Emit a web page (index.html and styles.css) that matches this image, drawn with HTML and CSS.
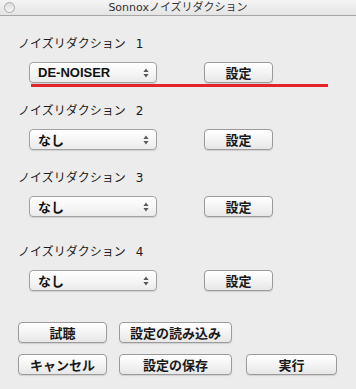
FILE: index.html
```html
<!DOCTYPE html>
<html lang="ja">
<head>
    <meta charset="UTF-8">
    <meta name="viewport" content="width=device-width, initial-scale=1.0">
    <title>Sonnoxノイズリダクション</title>
    <link rel="stylesheet" href="styles.css">
</head>
<body>
    <div class="window">
        <div class="titlebar">
            <span class="close"></span>
            <span class="title">Sonnoxノイズリダクション</span>
            <span></span>
        </div>

        <div class="content">
            <!-- 1 -->
            <div class="group">
                <p class="label">ノイズリダクション<span class="num">1</span></p>
                <div class="row">
                    <div class="select">
                        <span>DE-NOISER</span>
                        <svg class="arrows" width="6" height="10" viewBox="0 0 6 10"><path d="M3 0.5L5.6 4H0.4z M3 9.5L5.6 6H0.4z" fill="#5a5a5a"/></svg>
                    </div>
                    <button class="btn btn-set">設定</button>
                    <span class="mark"></span>
                </div>
            </div>
            <!-- 2 -->
            <div class="group">
                <p class="label">ノイズリダクション<span class="num">2</span></p>
                <div class="row">
                    <div class="select">
                        <span>なし</span>
                        <svg class="arrows" width="6" height="10" viewBox="0 0 6 10"><path d="M3 0.5L5.6 4H0.4z M3 9.5L5.6 6H0.4z" fill="#5a5a5a"/></svg>
                    </div>
                    <button class="btn btn-set">設定</button>
                </div>
            </div>
            <!-- 3 -->
            <div class="group">
                <p class="label">ノイズリダクション<span class="num">3</span></p>
                <div class="row">
                    <div class="select">
                        <span>なし</span>
                        <svg class="arrows" width="6" height="10" viewBox="0 0 6 10"><path d="M3 0.5L5.6 4H0.4z M3 9.5L5.6 6H0.4z" fill="#5a5a5a"/></svg>
                    </div>
                    <button class="btn btn-set">設定</button>
                </div>
            </div>
            <!-- 4 -->
            <div class="group group-last">
                <p class="label">ノイズリダクション<span class="num">4</span></p>
                <div class="row">
                    <div class="select">
                        <span>なし</span>
                        <svg class="arrows" width="6" height="10" viewBox="0 0 6 10"><path d="M3 0.5L5.6 4H0.4z M3 9.5L5.6 6H0.4z" fill="#5a5a5a"/></svg>
                    </div>
                    <button class="btn btn-set">設定</button>
                </div>
            </div>

            <div class="actions">
                <div class="action-row">
                    <button class="btn w-small">試聴</button>
                    <button class="btn w-wide">設定の読み込み</button>
                </div>
                <div class="action-row">
                    <button class="btn w-small">キャンセル</button>
                    <button class="btn w-wide">設定の保存</button>
                    <button class="btn w-run">実行</button>
                </div>
            </div>
        </div>
    </div>
</body>
</html>
```

FILE: styles.css
```css
*{
    margin: 0;
    padding: 0;
    box-sizing: border-box;
}
body{
    background: #ececec;
    font-family: "Noto Sans CJK JP", sans-serif;
    color: #111;
}
.window{
    width: 356px;
    height: 389px;
    background: #ececec;
}
.titlebar{
    height: 16px;
    display: grid;
    grid-template-columns: 1fr auto 1fr;
    align-items: center;
    background: linear-gradient(#f4f4f4, #e4e4e4);
    border-bottom: 1px solid #a6a6a6;
}
.close{
    width: 11px;
    height: 11px;
    margin-left: 4px;
    border-radius: 50%;
    border: 1px solid #a9a9a9;
    background: linear-gradient(#dcdcdc, #f6f6f6);
}
.title{
    font-family: "DejaVu Sans", "Noto Sans CJK JP", sans-serif;
    font-size: 11px;
    line-height: 15px;
    color: #333;
}
.content{
    padding-left: 18px;
}
.group{
    margin-top: 19px;
}
.group-last{
    margin-top: 26px;
}
.label{
    font-size: 12px;
    line-height: 16px;
    color: #1a1a1a;
}
.label .num{
    margin-left: 10px;
    font-family: "DejaVu Sans", sans-serif;
    font-size: 12px;
}
.row{
    position: relative;
    display: flex;
    margin-top: 10px;
    margin-left: 11px;
}
.select{
    width: 128px;
    height: 21px;
    display: flex;
    align-items: center;
    justify-content: space-between;
    padding: 0 7px 0 8px;
    border: 1px solid #a2a2a2;
    border-radius: 4px;
    background: linear-gradient(#ffffff, #f6f6f6 50%, #ebebeb);
    box-shadow: 0 1px 1px rgba(0,0,0,0.12);
    font-family: "Liberation Sans", "Noto Sans CJK JP", sans-serif;
    font-weight: bold;
    font-size: 13px;
}
.btn{
    height: 21px;
    border: 1px solid #9b9b9b;
    border-radius: 4px;
    background: linear-gradient(#ffffff, #f4f4f4 50%, #e7e7e7);
    box-shadow: 0 1px 1px rgba(0,0,0,0.12);
    font-family: "Noto Sans CJK JP", sans-serif;
    font-size: 13px;
    font-weight: bold;
    color: #1a1a1a;
    line-height: 19px;
}
.btn-set{
    width: 69px;
    margin-left: 47px;
}
/* 赤い下線 */
.mark{
    position: absolute;
    left: 2px;
    top: 22px;
    width: 297px;
    height: 3px;
    background: #e5242a;
}
.actions{
    margin-top: 31px;
    display: flex;
    flex-direction: column;
    gap: 11px;
}
.action-row{
    display: flex;
    gap: 12px;
}
.w-small{
    width: 89px;
}
.w-wide{
    width: 113px;
}
.w-run{
    width: 91px;
    margin-left: 2px;
}
```
